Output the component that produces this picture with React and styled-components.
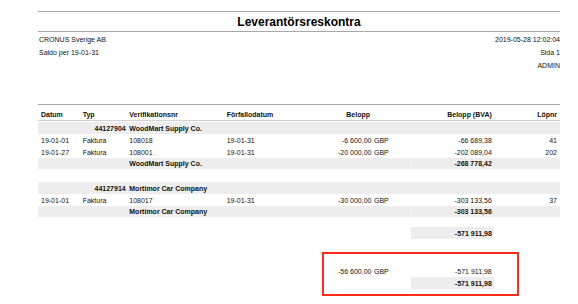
import React from 'react'
import styled, { createGlobalStyle } from 'styled-components'

const GlobalStyle = createGlobalStyle`
    html, body {
        margin: 0;
        padding: 0;
        background: #fff;
    }
    body {
        font-family: "Liberation Sans", Arial, sans-serif;
        color: #111;
    }
`

const COLUMNS = '42.7px 46px 96.3px 73px 76px 39px 83.3px 65.7px'

const groups = [
    {
        no: '44127904',
        name: 'WoodMart Supply Co.',
        rows: [
            ['19-01-01', 'Faktura', '108018', '19-01-31', '-6 600,00', 'GBP', '-66 689,38', '41'],
            ['19-01-27', 'Faktura', '108001', '19-01-31', '-20 000,00', 'GBP', '-202 089,04', '202']
        ],
        total: '-268 778,42'
    },
    {
        no: '44127914',
        name: 'Mortimor Car Company',
        rows: [
            ['19-01-01', 'Faktura', '108017', '19-01-31', '-30 000,00', 'GBP', '-303 133,56', '37']
        ],
        total: '-303 133,56'
    }
]

// padding per column: [left, right, align]
const colStyle = [
    [3, 3, 'left'],
    [2, 1, 'left'],
    [2.6, 2, 'left'],
    [3.7, 2, 'left'],
    [2, 0.5, 'right'],
    [2, 2, 'left'],
    [2, 2.5, 'right'],
    [2, 3, 'right']
]

const Page = styled.div`
    width: 560px;
    height: 304px;
    box-sizing: border-box;
    padding: 11px 0 0 38px;
    overflow: hidden;
`

const TitleBar = styled.div`
    height: 19px;
    border-top: 1px solid #a8a8a8;
    border-bottom: 1px solid #a8a8a8;
    display: flex;
    align-items: center;
    justify-content: center;
    font-size: 12px;
    font-weight: bold;
    color: #000;
`

const Info = styled.div`
    display: flex;
    justify-content: space-between;
    height: 71px;
    padding-top: 1px;
    font-size: 7px;
    line-height: 13px;
    border-bottom: 1px solid #a8a8a8;
`

const InfoColumn = styled.div`
    display: flex;
    flex-direction: column;
    align-items: ${p => p.$right ? 'flex-end' : 'flex-start'};
    padding-left: ${p => p.$right ? 0 : 1}px;
`

const Table = styled.div`
    display: flex;
    flex-direction: column;
    font-size: 7px;
`

const Row = styled.div`
    display: grid;
    grid-template-columns: ${COLUMNS};
    align-items: center;
    box-sizing: border-box;
    height: ${p => p.$height || 12}px;
    margin-top: ${p => p.$gap || 0}px;
    background: ${p => p.$shade ? '#ededed' : 'transparent'};
    font-weight: ${p => p.$bold ? 'bold' : 'normal'};
    & > * + * {
        box-shadow: ${p => p.$shade ? 'inset 1px 0 #f5f5f5' : 'none'};
    }
`

const HeaderRow = styled(Row)`
    height: 16px;
    padding-top: 3px;
    border-bottom: 1px solid #d2d2d2;
    font-weight: bold;
`

const Cell = styled.div`
    grid-column: ${p => p.$col + 1};
    padding: 0 ${p => colStyle[p.$col][1]}px 0 ${p => colStyle[p.$col][0]}px;
    text-align: ${p => colStyle[p.$col][2]};
    white-space: nowrap;
    font-weight: ${p => p.$bold ? 'bold' : 'inherit'};
    ${p => p.$shade && 'background: #ededed; align-self: stretch; display: flex; align-items: center; justify-content: flex-end;'}
`

const FinalBlock = styled.div`
    position: relative;
    margin-top: 26px;
`

const Highlight = styled.div`
    position: absolute;
    top: -13px;
    left: 284px;
    width: 197px;
    height: 44px;
    box-sizing: border-box;
    border: 2px solid #ff2b1c;
    pointer-events: none;
`

const headers = ['Datum', 'Typ', 'Verifikationsnr', 'Förfallodatum', 'Belopp', '', 'Belopp (BVA)', 'Löpnr']

const Group = ({ group, gap }) => (
    <>
        <Row $shade $bold $gap={gap}>
            <Cell $col={1} style={{ textAlign: 'right' }}>{group.no}</Cell>
            <Cell $col={2}>{group.name}</Cell>
        </Row>
        {group.rows.map(row => (
            <Row key={row[2]}>
                {row.map((value, i) => <Cell key={i} $col={i}>{value}</Cell>)}
            </Row>
        ))}
        <Row $shade $bold $height={11}>
            <Cell $col={2}>{group.name}</Cell>
            <Cell $col={6}>{group.total}</Cell>
        </Row>
    </>
)

const App = () => (
    <>
        <GlobalStyle />
        <Page>
            <TitleBar>Leverantörsreskontra</TitleBar>
            <Info>
                <InfoColumn>
                    <span>CRONUS Sverige AB</span>
                    <span>Saldo per 19-01-31</span>
                </InfoColumn>
                <InfoColumn $right>
                    <span>2019-05-28 12:02:04</span>
                    <span>Sida 1</span>
                    <span>ADMIN</span>
                </InfoColumn>
            </Info>
            <Table>
                <HeaderRow>
                    {headers.map((h, i) => <Cell key={i} $col={i} style={i === 4 ? { paddingRight: 2 } : null}>{h}</Cell>)}
                </HeaderRow>
                <Group group={groups[0]} gap={1} />
                <Group group={groups[1]} gap={13} />
                <Row $gap={10}>
                    <Cell $col={6} $bold $shade>-571 911,98</Cell>
                </Row>
                <FinalBlock>
                    <Row>
                        <Cell $col={4}>-56 600,00</Cell>
                        <Cell $col={5}>GBP</Cell>
                        <Cell $col={6}>-571 911,98</Cell>
                    </Row>
                    <Row>
                        <Cell $col={6} $bold $shade>-571 911,98</Cell>
                    </Row>
                    <Highlight />
                </FinalBlock>
            </Table>
        </Page>
    </>
)

export default App
